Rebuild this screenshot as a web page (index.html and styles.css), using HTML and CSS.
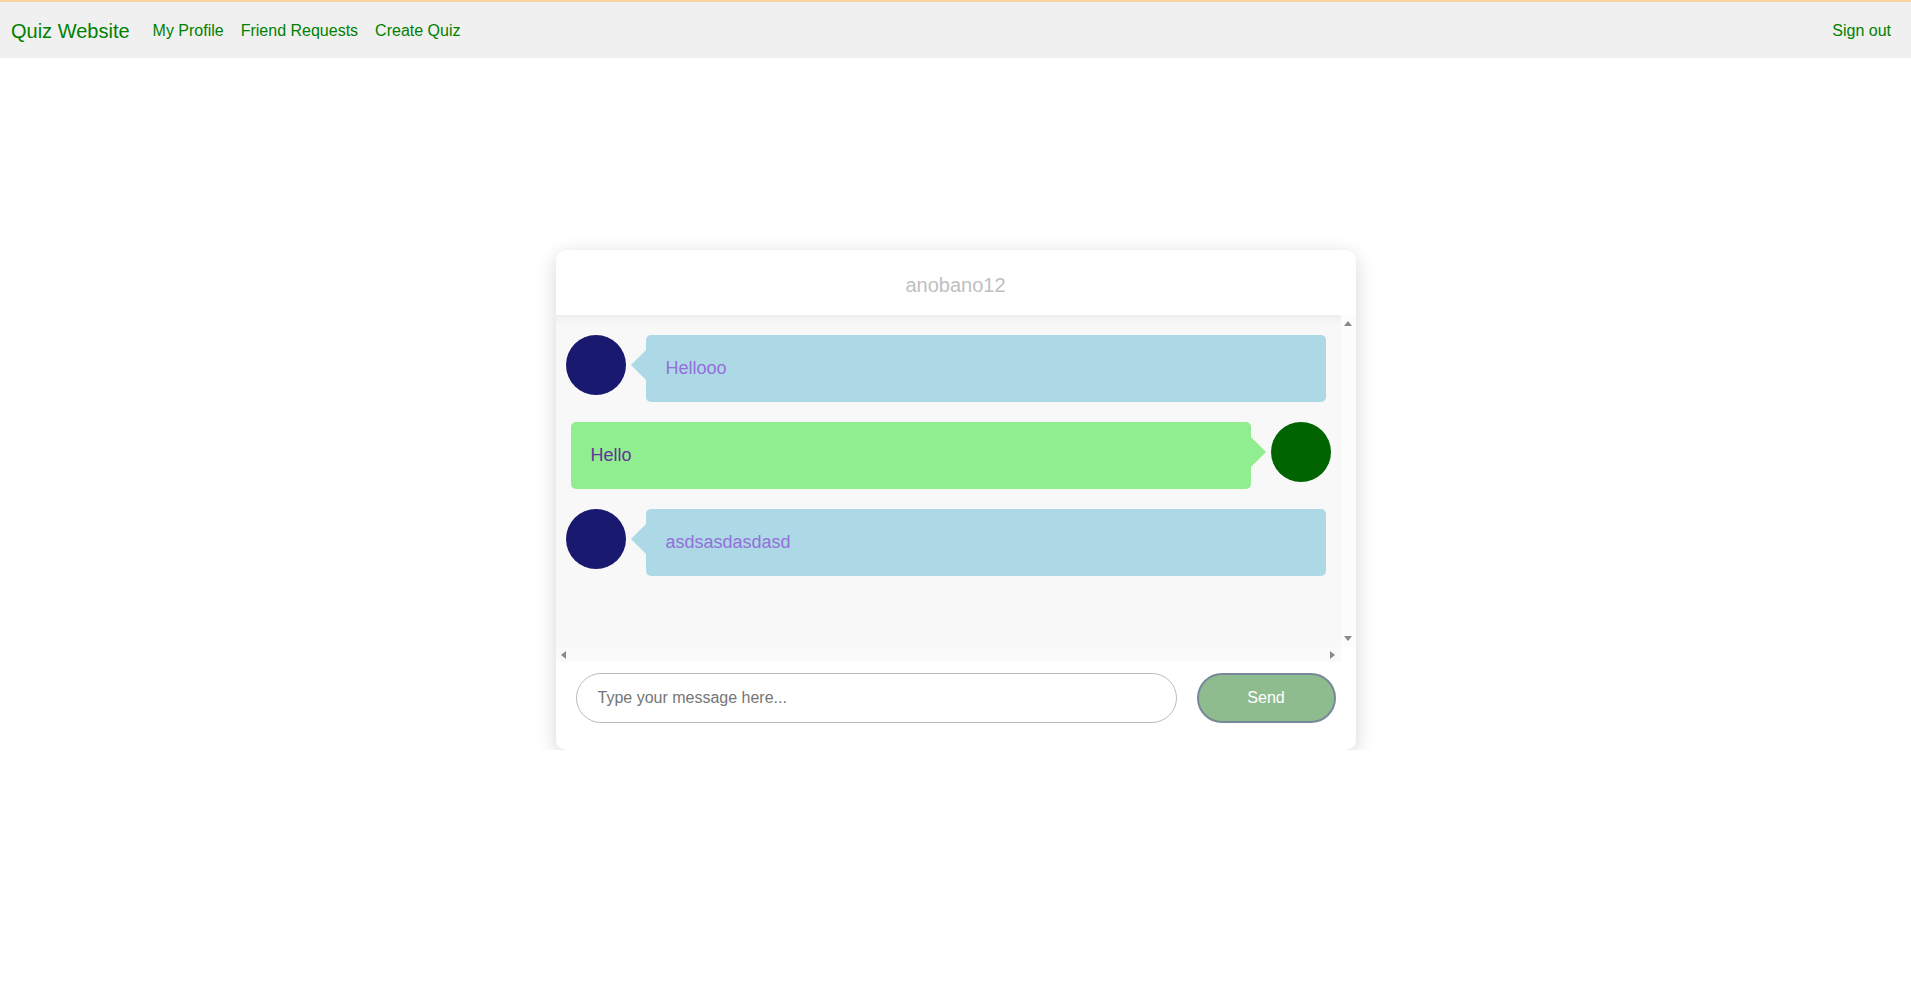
FILE: index.html
```html
<!DOCTYPE html>
<html lang="en">
<head>
<meta charset="utf-8">
<title>Quiz Website - Chat</title>
<link rel="stylesheet" href="styles.css">
</head>
<body>
<nav class="navbar">
  <a class="brand" href="#">Quiz Website</a>
  <div class="nav-links">
    <a href="#">My Profile</a>
    <a href="#">Friend Requests</a>
    <a href="#">Create Quiz</a>
  </div>
  <a class="signout" href="#">Sign out</a>
</nav>
<main class="page">
  <section class="chat">
    <header class="chat-header">anobano12</header>
    <div class="scroll-frame">
      <div class="messages">
        <div class="msg msg-left">
          <div class="avatar avatar-them"></div>
          <div class="bubble bubble-them">Hellooo</div>
        </div>
        <div class="msg msg-right">
          <div class="bubble bubble-me">Hello</div>
          <div class="avatar avatar-me"></div>
        </div>
        <div class="msg msg-left">
          <div class="avatar avatar-them"></div>
          <div class="bubble bubble-them">asdsasdasdasd</div>
        </div>
      </div>
      <div class="vtrack">
        <span class="arrow arrow-up"></span>
        <span class="arrow arrow-down"></span>
      </div>
      <div class="htrack">
        <span class="arrow arrow-left"></span>
        <span class="arrow arrow-right"></span>
      </div>
      <div class="corner"></div>
    </div>
    <form class="composer">
      <input class="composer-input" type="text" placeholder="Type your message here...">
      <button class="composer-send" type="button">Send</button>
    </form>
  </section>
</main>
</body>
</html>
```

FILE: styles.css
```css
html, body {
  margin: 0;
  padding: 0;
  background: #ffffff;
  font-family: "Liberation Sans", Arial, sans-serif;
}

a {
  text-decoration: none;
  color: #008000;
}

.navbar {
  display: flex;
  align-items: center;
  height: 56px;
  box-sizing: content-box;
  border-top: 2px solid #fbd3a2;
  background: #f0f0f0;
  padding: 2px 20px 0 11px;
  height: 54px;
}

.brand {
  font-size: 20px;
  margin-right: 23px;
}

.nav-links {
  display: flex;
  gap: 17px;
  font-size: 16px;
}

.signout {
  margin-left: auto;
  font-size: 16px;
}

.page {
  display: flex;
  justify-content: center;
  padding-top: 192px;
}

.chat {
  width: 800px;
  height: 500px;
  box-sizing: border-box;
  background: #ffffff;
  border-radius: 10px;
  box-shadow: 0 5px 20px rgba(0, 0, 0, 0.17);
  display: flex;
  flex-direction: column;
}

.chat-header {
  height: 65px;
  box-sizing: border-box;
  padding-top: 5px;
  display: flex;
  align-items: center;
  justify-content: center;
  font-size: 20px;
  color: #c0c0c0;
}

.scroll-frame {
  display: grid;
  grid-template-columns: 785px 15px;
  grid-template-rows: 332px 15px;
  flex: none;
}

.messages {
  box-sizing: border-box;
  overflow: hidden;
  background: #f8f8f8;
  padding: 20px 10px;
  display: flex;
  flex-direction: column;
  gap: 20px;
  box-shadow: inset 0 10px 10px -8px rgba(0, 0, 0, 0.07);
}

.vtrack {
  background: #fcfcfc;
  display: flex;
  flex-direction: column;
  justify-content: space-between;
  align-items: center;
  padding: 6px 0 6px;
}

.htrack {
  background: #fafafa;
  display: flex;
  justify-content: space-between;
  align-items: center;
  padding: 0 6px 0 5px;
}

.corner {
  background: #ffffff;
}

.arrow {
  width: 0;
  height: 0;
  display: block;
}

.arrow-up {
  border-left: 4px solid transparent;
  border-right: 4px solid transparent;
  border-bottom: 5px solid #8a8a8a;
}

.arrow-down {
  border-left: 4px solid transparent;
  border-right: 4px solid transparent;
  border-top: 5px solid #8a8a8a;
}

.arrow-left {
  border-top: 4px solid transparent;
  border-bottom: 4px solid transparent;
  border-right: 5px solid #8a8a8a;
}

.arrow-right {
  border-top: 4px solid transparent;
  border-bottom: 4px solid transparent;
  border-left: 5px solid #8a8a8a;
}

.msg {
  display: flex;
  align-items: flex-start;
  gap: 20px;
  flex: none;
}

.avatar {
  width: 60px;
  height: 60px;
  border-radius: 50%;
  flex: none;
}

.avatar-them {
  background: #191970;
}

.avatar-me {
  background: #006400;
}

.bubble {
  position: relative;
  flex: 1;
  padding: 20px;
  font-size: 18px;
  line-height: 1.5;
  border-radius: 5px;
}

.msg-left .bubble {
  margin-right: 5px;
}

.msg-right .bubble {
  margin-left: 5px;
}

.bubble-them {
  background: #add8e6;
  color: #9370db;
}

.bubble-me {
  background: #90ee90;
  color: #663399;
}

.bubble::before {
  content: "";
  position: absolute;
  top: 15px;
  width: 0;
  height: 0;
  border-top: 15px solid transparent;
  border-bottom: 15px solid transparent;
}

.bubble-them::before {
  left: -15px;
  border-right: 15px solid #add8e6;
}

.bubble-me::before {
  right: -15px;
  border-left: 15px solid #90ee90;
}

.composer {
  display: flex;
  gap: 20px;
  padding: 11px 20px 27px;
  margin: 0;
}

.composer-input {
  flex: 1;
  height: 50px;
  box-sizing: border-box;
  border: 1px solid #bbbbbb;
  border-radius: 25px;
  padding: 0 20px 0 21px;
  font-family: "Liberation Sans", Arial, sans-serif;
  font-size: 16px;
  outline: none;
}

.composer-input::placeholder {
  color: #757575;
}

.composer-send {
  width: 139px;
  height: 50px;
  box-sizing: border-box;
  border: 2px solid #778899;
  border-radius: 25px;
  background: #8fbc8f;
  color: #ffffff;
  font-family: "Liberation Sans", Arial, sans-serif;
  font-size: 16px;
}
```
